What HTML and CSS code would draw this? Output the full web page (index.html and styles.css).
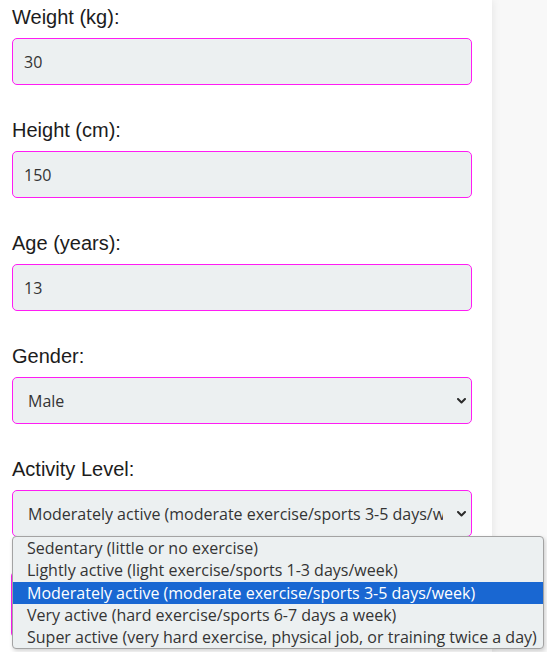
FILE: index.html
```html
<!DOCTYPE html>
<html lang="en">
<head>
<meta charset="utf-8">
<title>Calorie Calculator</title>
<link rel="stylesheet" href="styles.css">
</head>
<body>
<div class="page">
  <form class="card">
    <div class="group">
      <label class="label" for="weight">Weight (kg):</label>
      <input class="field" id="weight" type="text" value="30">
    </div>
    <div class="group">
      <label class="label" for="height">Height (cm):</label>
      <input class="field" id="height" type="text" value="150">
    </div>
    <div class="group">
      <label class="label" for="age">Age (years):</label>
      <input class="field" id="age" type="text" value="13">
    </div>
    <div class="group">
      <label class="label" for="gender">Gender:</label>
      <div class="select-wrap">
        <select class="field select" id="gender">
          <option>Male</option>
          <option>Female</option>
        </select>
        <svg class="chev" viewBox="0 0 9 6" width="9" height="6"><path d="M1 1 L4.5 4.5 L8 1" fill="none" stroke="#2b2b2b" stroke-width="2" stroke-linecap="round" stroke-linejoin="round"/></svg>
      </div>
    </div>
    <div class="group">
      <label class="label" for="activity">Activity Level:</label>
      <div class="select-wrap">
        <select class="field select" id="activity">
          <option>Sedentary (little or no exercise)</option>
          <option>Lightly active (light exercise/sports 1-3 days/week)</option>
          <option selected>Moderately active (moderate exercise/sports 3-5 days/week)</option>
          <option>Very active (hard exercise/sports 6-7 days a week)</option>
          <option>Super active (very hard exercise, physical job, or training twice a day)</option>
        </select>
        <svg class="chev" viewBox="0 0 9 6" width="9" height="6"><path d="M1 1 L4.5 4.5 L8 1" fill="none" stroke="#2b2b2b" stroke-width="2" stroke-linecap="round" stroke-linejoin="round"/></svg>
      </div>
    </div>
    <div class="calc" aria-hidden="true"></div>
  </form>
  <h2 class="result">Your daily calorie needs: 2,130 calories per day</h2>

  <ul class="dropdown">
    <li class="opt">Sedentary (little or no exercise)</li>
    <li class="opt">Lightly active (light exercise/sports 1-3 days/week)</li>
    <li class="opt active">Moderately active (moderate exercise/sports 3-5 days/week)</li>
    <li class="opt">Very active (hard exercise/sports 6-7 days a week)</li>
    <li class="opt">Super active (very hard exercise, physical job, or training twice a day)</li>
  </ul>
</div>
</body>
</html>
```

FILE: styles.css
```css
* { box-sizing: border-box; }

html, body {
  margin: 0;
  padding: 0;
}

body {
  background: #f8f8f8;
  font-family: "Liberation Sans", Arial, sans-serif;
  color: #1c1c1c;
  overflow: hidden;
}

.page {
  position: relative;
  width: 547px;
  height: 652px;
  overflow: hidden;
}

.card {
  display: flex;
  flex-direction: column;
  width: 492px;
  background: #ffffff;
  padding: 6px 20px 16px 12px;
  margin: 0;
  box-shadow: 0 0 9px rgba(0, 0, 0, 0.09);
}

.group {
  display: flex;
  flex-direction: column;
  margin-bottom: 34px;
}

.group:last-of-type {
  margin-bottom: 1px;
}

.label {
  display: block;
  font-size: 20px;
  line-height: 23px;
  margin-bottom: 9px;
  color: #1c1c1c;
}

.field {
  display: block;
  width: 460px;
  height: 47px;
  margin: 0;
  padding: 0 11px;
  border: 1px solid #ff1cf4;
  border-radius: 5px;
  background: #ecf0f1;
  color: #343434;
  font-family: "Open Sans", "Noto Sans", sans-serif;
  font-size: 16px;
  outline: none;
}

.select-wrap {
  position: relative;
}

.select {
  -webkit-appearance: none;
  appearance: none;
  padding-left: 15px;
  padding-right: 28px;
  text-overflow: clip;
}

.chev {
  position: absolute;
  right: 6px;
  top: 21px;
  display: block;
}

.calc {
  display: block;
  width: 461px;
  height: 67px;
  margin: 0 0 0 -1px;
  border: 1px solid #ff1cf4;
  border-radius: 5px;
  background: #ffffff;
}

.result {
  margin: 28px 0 0 12px;
  font-size: 22px;
  line-height: 26px;
  font-weight: bold;
  color: #c0392b;
}

.dropdown {
  position: absolute;
  top: 536px;
  left: 12px;
  width: 532px;
  margin: 0;
  padding: 0;
  list-style: none;
  background: #ecf0f1;
  border: 1px solid #a3a3a3;
  border-radius: 4px;
  box-shadow: 1px 2px 4px rgba(0, 0, 0, 0.18);
  overflow: hidden;
}

.opt {
  height: 22.3px;
  line-height: 22.3px;
  padding: 0 0 0 14px;
  white-space: nowrap;
  font-family: "Open Sans", "Noto Sans", sans-serif;
  font-size: 16px;
  color: #343434;
}

.opt.active {
  background: #1967d2;
  color: #ffffff;
}
```
